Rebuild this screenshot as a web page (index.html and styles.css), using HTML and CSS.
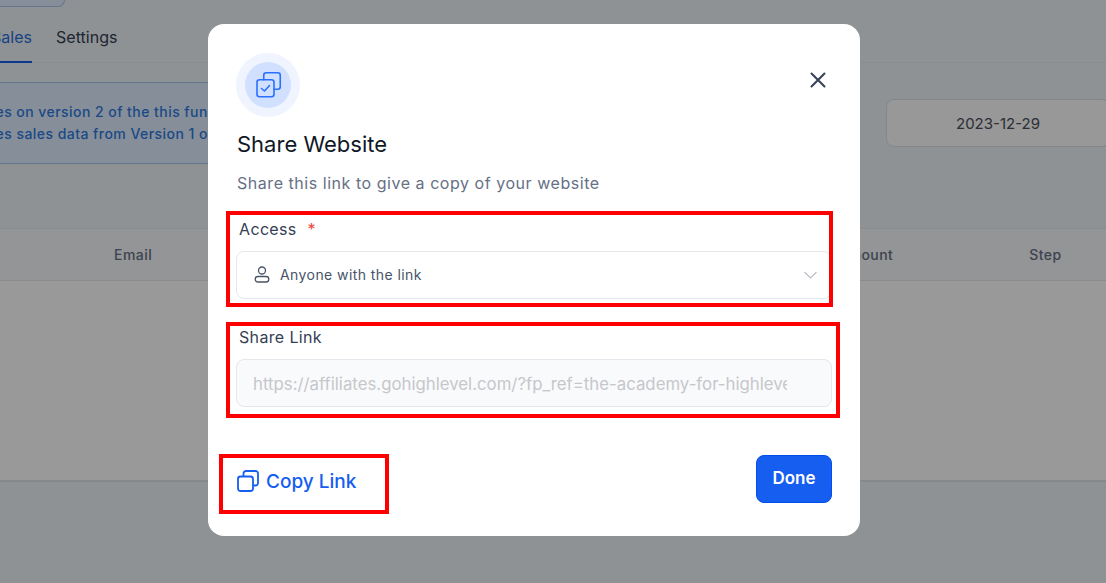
FILE: index.html
```html
<!DOCTYPE html>
<html lang="en">
<head>
    <meta charset="UTF-8">
    <meta name="viewport" content="width=device-width, initial-scale=1.0">
    <title>Share Website</title>
    <link rel="stylesheet" href="styles.css">
</head>
<body>
    <!-- Page behind the dialog, scrolled sideways -->
    <div class="page">
        <div class="top-pill"></div>
        <div class="tabs">
            <div class="tab active">Sales</div>
            <div class="tab">Settings</div>
        </div>
        <div class="toolbar">
            <div class="banner">
                <p class="line-one">Updates on version 2 of the this funnel</p>
                <p class="line-two">Includes sales data from Version 1 of</p>
            </div>
            <div class="date-box">2023-12-29</div>
        </div>
        <div class="sales-table">
            <div class="table-head">
                <span class="col-email">Email</span>
                <span class="col-amount">Amount</span>
                <span class="col-step">Step</span>
            </div>
            <div class="table-body"></div>
        </div>
    </div>

    <div class="overlay"></div>

    <!-- Share dialog -->
    <div class="modal">
        <div class="modal-top">
            <div class="icon-ring">
                <div class="icon-disc">
                    <svg width="28" height="28" viewBox="0 0 28 28" fill="none" stroke="#2970ff" stroke-width="1.600" stroke-linecap="round" stroke-linejoin="round">
                        <path d="M9.750 8.750V4.250A2.500 2.500 0 0 1 12.250 1.750H23.750A2.500 2.500 0 0 1 26.250 4.250V15.750A2.500 2.500 0 0 1 23.750 18.250H20"/>
                        <rect x="3" y="8.750" width="17" height="17" rx="2.500"/>
                        <path d="M7.500 17.500L10.500 20L15.500 14.500"/>
                    </svg>
                </div>
            </div>
            <button class="close-btn" aria-label="Close">
                <svg width="16" height="16" viewBox="0 0 16 16" fill="none" stroke="#344054" stroke-width="2" stroke-linecap="round">
                    <path d="M1.500 1.500L14.500 14.500M14.500 1.500L1.500 14.500"/>
                </svg>
            </button>
        </div>
        <h2 class="modal-title">Share Website</h2>
        <p class="modal-sub">Share this link to give a copy of your website</p>

        <label class="field-label access-label">Access <span class="required">*</span></label>
        <div class="select-box">
            <svg width="16" height="18" viewBox="0 0 16 18" fill="none" stroke="#475467" stroke-width="1.300">
                <circle cx="8" cy="4.500" r="3.500"/>
                <rect x="1.200" y="10.500" width="13.600" height="5.500" rx="2.750"/>
            </svg>
            <span class="select-text">Anyone with the link</span>
            <svg class="chevron" width="13" height="8" viewBox="0 0 13 8" fill="none" stroke="#b9bcc3" stroke-width="1.100">
                <path d="M0.500 1L6.500 7L12.500 1"/>
            </svg>
        </div>

        <label class="field-label link-label">Share Link</label>
        <div class="link-box">
            <span class="link-text">https://affiliates.gohighlevel.com/?fp_ref=the-academy-for-highlevel</span>
        </div>

        <div class="modal-foot">
            <a class="copy-link" href="#">
                <svg width="22" height="22" viewBox="0 0 22 22" fill="none" stroke="#155eef" stroke-width="1.800" stroke-linejoin="round">
                    <path d="M6.500 6V3.500A2.500 2.500 0 0 1 9 1H18.500A2.500 2.500 0 0 1 21 3.500V13A2.500 2.500 0 0 1 18.500 15.500H16"/>
                    <rect x="1" y="6.500" width="15" height="14.500" rx="2.500"/>
                </svg>
                Copy Link
            </a>
            <button class="done-btn">Done</button>
        </div>
    </div>

    <!-- Red annotation boxes drawn on top of the screenshot -->
    <div class="mark mark-access"></div>
    <div class="mark mark-link"></div>
    <div class="mark mark-copy"></div>
</body>
</html>
```

FILE: styles.css
```css
* {
    box-sizing: border-box;
}
html, body {
    margin: 0;
    height: 583px;
    overflow: hidden;
}
body {
    position: relative;
    font-family: Inter, "Liberation Sans", sans-serif;
    background-color: #eef3f7;
}
p, h2 {
    margin: 0;
}

/* page behind the dialog */
.page {
    margin-left: -40px;
    width: 1186px;
}
.top-pill {
    width: 105px;
    height: 7px;
    background-color: #dfeeff;
    border: 1px solid #a9c4ee;
    border-top: none;
    border-radius: 0 0 12px 12px;
}
.tabs {
    display: flex;
    gap: 24px;
    height: 56px;
    padding-left: 31px;
    border-bottom: 1px solid #e6e8ec;
}
.tab {
    height: 56px;
    padding-top: 20px;
    font-size: 16px;
    line-height: 20px;
    letter-spacing: 0.03px;
    color: #344054;
}
.tab.active {
    color: #2a6fdb;
    border-bottom: 2px solid #155eef;
}
.toolbar {
    display: flex;
    margin-top: 19px;
    height: 146px;
}
.banner {
    width: 400px;
    height: 82px;
    padding-top: 18px;
    background-color: #dfeeff;
    border: 1px solid #a9c4ee;
    font-size: 14px;
    font-weight: 500;
    line-height: 22px;
    letter-spacing: 0.45px;
    color: #2f7ae0;
    white-space: nowrap;
}
.line-one {
    margin-left: -8px;
}
.line-two {
    margin-left: -9px;
}
.date-box {
    width: 224px;
    height: 48px;
    margin: 17px 0 0 526px;
    background-color: #fdfdfd;
    border: 1px solid #dcdfe4;
    border-radius: 8px;
    font-size: 15px;
    line-height: 47px;
    text-align: center;
    color: #4a4f57;
}
.table-head {
    display: flex;
    height: 53px;
    background-color: #f5f8fa;
    border-top: 1px solid #e6e8ec;
    border-bottom: 1px solid #e6e8ec;
    font-size: 14px;
    font-weight: 500;
    letter-spacing: 0.45px;
    line-height: 51px;
    color: #667085;
}
.col-email {
    margin-left: 154px;
}
.col-amount {
    margin-left: 686px;
}
.col-step {
    margin-left: 136px;
}
.table-body {
    height: 201px;
    background-color: #fff;
    border-bottom: 2px solid #dfe3e8;
}
.overlay {
    position: absolute;
    inset: 0;
    background-color: rgba(0, 0, 0, 0.4);
}

/* dialog */
.modal {
    position: absolute;
    left: 208px;
    top: 24px;
    width: 652px;
    height: 512px;
    padding: 29px 28px 0 28px;
    background-color: #fff;
    border-radius: 16px;
}
.modal-top {
    display: flex;
    justify-content: space-between;
    align-items: flex-start;
}
.icon-ring {
    display: flex;
    align-items: center;
    justify-content: center;
    width: 64px;
    height: 64px;
    background-color: #eff4ff;
    border-radius: 50%;
}
.icon-disc {
    display: flex;
    align-items: center;
    justify-content: center;
    width: 46px;
    height: 46px;
    background-color: #d1e0ff;
    border-radius: 50%;
}
.close-btn {
    display: flex;
    margin: 19px 6px 0 0;
    padding: 0;
    background: none;
    border: none;
    cursor: pointer;
}
.modal-title {
    margin: 13px 0 0 1px;
    font-size: 22px;
    font-weight: 400;
    line-height: 28px;
    color: #101828;
}
.modal-sub {
    margin: 13px 0 0 1px;
    font-size: 16px;
    line-height: 24px;
    letter-spacing: 0.54px;
    color: #667085;
}
.field-label {
    display: block;
    margin-left: 3px;
    font-size: 16px;
    line-height: 22px;
    letter-spacing: 0.35px;
    color: #344054;
}
.access-label {
    margin-top: 23px;
}
.required {
    margin-left: 6px;
    color: #f04438;
}
.select-box {
    display: flex;
    align-items: center;
    gap: 10px;
    height: 48px;
    margin-top: 11px;
    padding: 0 14px 0 17px;
    border: 1px solid #e4e7ec;
    border-radius: 8px;
    font-size: 14px;
    letter-spacing: 0.42px;
    color: #475467;
}
.select-text {
    padding-bottom: 2px;
}
.chevron {
    margin-left: auto;
}
.link-label {
    margin-top: 27px;
}
.link-box {
    height: 48px;
    margin-top: 11px;
    padding: 1px 44px 0 16px;
    background-color: #f9fafb;
    border: 1px solid #e4e7ec;
    border-radius: 8px;
    overflow: hidden;
    font-size: 16.800px;
    line-height: 46px;
    color: #c6c7cb;
}
.link-text {
    display: block;
    overflow: hidden;
    white-space: nowrap;
}
.modal-foot {
    display: flex;
    justify-content: space-between;
    align-items: center;
    margin-top: 48px;
}
.copy-link {
    display: flex;
    align-items: center;
    gap: 7px;
    margin: 4px 0 0 1px;
    font-size: 19px;
    font-weight: 500;
    color: #155eef;
    text-decoration: none;
}
.done-btn {
    width: 76px;
    height: 48px;
    padding-bottom: 3px;
    background-color: #155eef;
    color: #fff;
    border: 1px solid #004eeb;
    border-radius: 8px;
    font-family: inherit;
    font-size: 17px;
    font-weight: 600;
    cursor: pointer;
}

/* red annotations */
.mark {
    position: absolute;
    border: 4px solid #ff0000;
}
.mark-access {
    left: 226px;
    top: 211px;
    width: 607px;
    height: 96px;
}
.mark-link {
    left: 226px;
    top: 322px;
    width: 614px;
    height: 96px;
}
.mark-copy {
    left: 219px;
    top: 454px;
    width: 170px;
    height: 60px;
}
```
